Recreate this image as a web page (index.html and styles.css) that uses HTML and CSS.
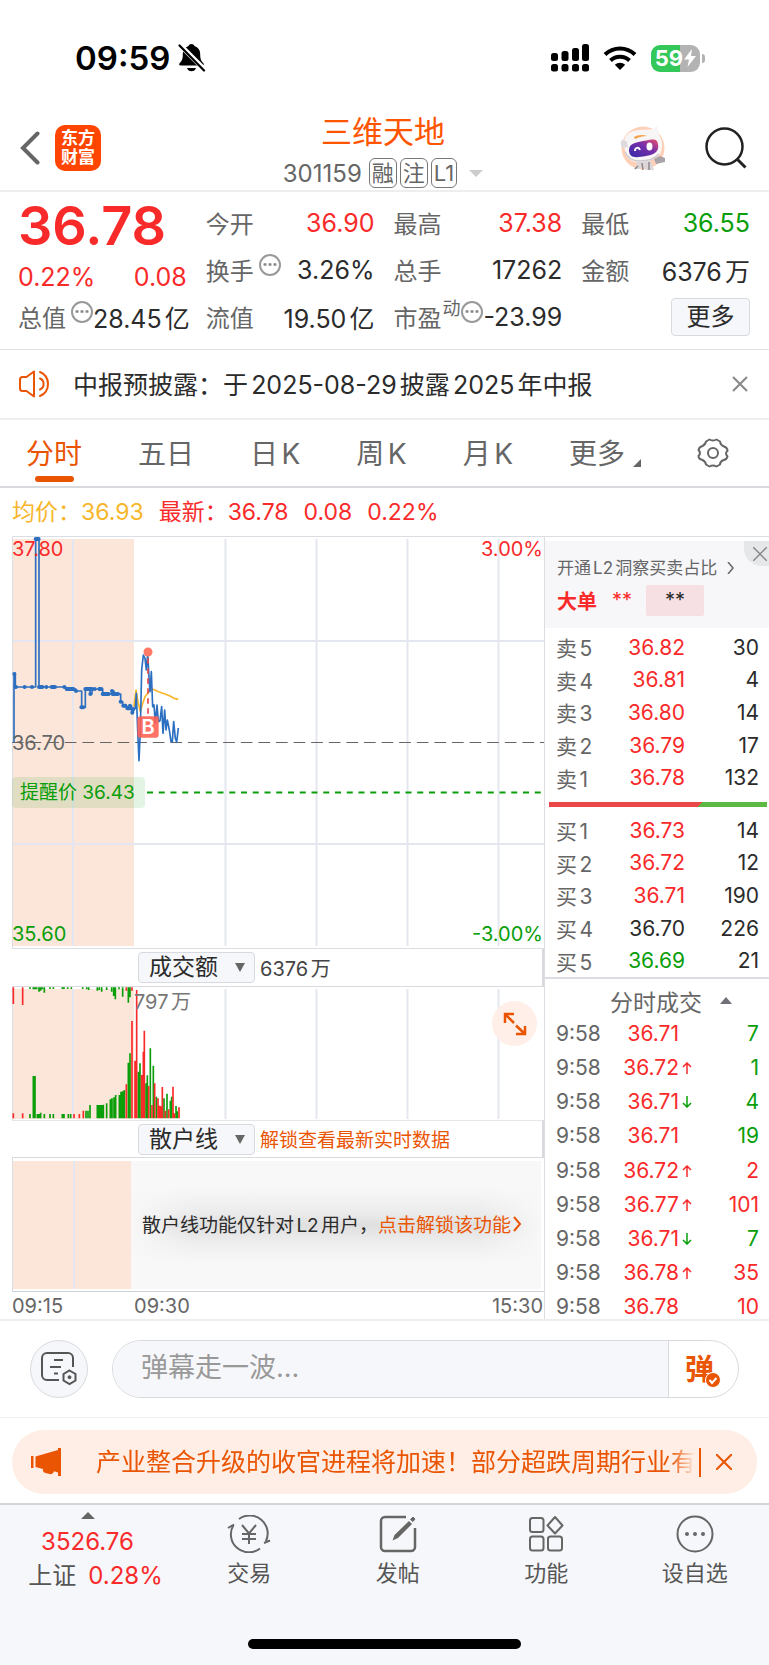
FILE: index.html
```html
<!DOCTYPE html>
<html lang="zh-CN">
<head>
<meta charset="utf-8">
<meta name="viewport" content="width=device-width, initial-scale=1">
<title>三维天地 301159</title>
<link rel="stylesheet" href="styles.css">
</head>
<body>
<div class="app">
  <div class="status">
    <div class="status-left">
      <span class="clock">09:59</span>
      <svg class="bell" viewBox="0 0 28 30" width="28" height="30"><path d="M13.500 1c-1.500 0-2.600.8-3 2.100C6.200 4.600 4.800 8 4.800 11.500c0 5-1.300 6.700-3.200 8.700-.9 1-.4 2.300 1 2.300h21.800c1.400 0 1.900-1.300 1-2.300-1.900-2-3.200-3.700-3.200-8.700 0-3.500-1.400-6.900-5.700-8.400-.4-1.300-1.500-2.100-3-2.100z"/><path d="M9 25h9c-.6 2-2.300 3.300-4.500 3.300S9.600 27 9 25z"/><path d="M0 0l27 27" stroke="#fff" stroke-width="5"/><path d="M1.500 2.500l24.500 25" stroke="#000" stroke-width="2.200" stroke-linecap="round"/></svg>
    </div>
    <div class="status-right">
      <svg viewBox="0 0 38 28" width="38" height="28"><rect x="0" y="9" width="7" height="8" rx="2.500"/><rect x="10.500" y="7" width="7" height="10" rx="2.500"/><rect x="21" y="4" width="7" height="13" rx="2.500"/><rect x="31" y="0" width="7" height="17" rx="2.500"/><rect x="0" y="20" width="7" height="7.500" rx="2.500"/><rect x="10.500" y="20" width="7" height="7.500" rx="2.500"/><rect x="21" y="20" width="7" height="7.500" rx="2.500"/><rect x="31" y="20" width="7" height="7.500" rx="2.500"/></svg>
      <svg viewBox="0 0 34 26" width="34" height="26" fill="none" stroke="#000" stroke-width="4"><path d="M2 9.500a21.500 21.500 0 0 1 30 0"/><path d="M7.500 15.500a13.800 13.800 0 0 1 19 0"/><path d="M11.800 19.800a7.600 7.600 0 0 1 10.400 0L17 25z" fill="#000" stroke="none"/></svg>
      <span class="battery"><span class="battery-num">59</span><svg viewBox="0 0 12 18" width="12" height="18"><path d="M8 0L0 10.500h5L3.500 18 12 7H7z" fill="#fff"/></svg></span>
    </div>
  </div>

  <header class="header">
    <div class="head-left">
      <button class="plain" aria-label="返回"><svg viewBox="0 0 20 34" width="20" height="34" fill="none" stroke="#666" stroke-width="4" stroke-linecap="round"><path d="M17.500 2.500L3 17l14.500 14.500"/></svg></button>
      <span class="logo"><span>东方</span><span>财富</span></span>
    </div>
    <div class="head-mid">
      <h1>三维天地</h1>
      <div class="code"><span class="num">301159</span><span class="tags"><span class="tag">融</span><span class="tag">注</span><span class="tag">L1</span></span><i class="caret-down"></i></div>
    </div>
    <div class="head-right">
      <svg viewBox="0 0 46 46" width="46" height="46">
        <defs><linearGradient id="visor" x1="0" y1="1" x2="1" y2="0"><stop offset="0" stop-color="#3328a8"/><stop offset=".6" stop-color="#7a2fa8"/><stop offset="1" stop-color="#f0506a"/></linearGradient></defs>
        <circle cx="23" cy="23" r="21.500" fill="#ffd0b8"/>
        <path d="M16 36l1 4-3 4h6l3-3 3 4h8l-3-9z" fill="#dcd8da"/><path d="M22 38l1 7M29 37v8M18 41l-3 3" stroke="#8d868a" stroke-width="1.500"/>
        <path d="M34 34l6-3 5 2v4l-9 2z" fill="#a9a4a9"/>
        <path d="M4 19C3 10 11 5 20 5c8-1 13 1 17-4l2 9c4 6 4 13 1 19-5 6-14 8-22 8C9 37 6 31 5 26z" fill="#f7f5f6"/>
        <path d="M5 27c3 7 8 9 14 9 8 0 16-2 20-7" fill="none" stroke="#cfcacd" stroke-width="1.500"/>
        <path d="M1 16c2-2 5-1 6 1l1 5-5 1c-2-2-3-4-2-7z" fill="#dedadd"/>
        <path d="M14 12c3-2 9-3 13-1-4 0-8 1-12 3z" fill="#f5a04a"/>
        <path d="M9 26c0-7 4-8 14-10s14-3 15 3-1 10-12 12S10 33 9 26z" fill="url(#visor)"/>
        <path d="M15 26c0-4 4-4 5-1" fill="none" stroke="#fff" stroke-width="2"/><ellipse cx="29.500" cy="21.500" rx="3" ry="4" fill="#fff"/>
      </svg>
      <button class="plain" aria-label="搜索"><svg viewBox="0 0 42 42" width="42" height="42" fill="none" stroke="#222" stroke-width="2.500"><circle cx="19.500" cy="19.500" r="18"/><path d="M32 32l8.500 8.500" stroke-width="3"/></svg></button>
    </div>
  </header>

  <section class="quote">
    <div class="price-box">
      <strong class="price">36.78</strong>
      <div class="change"><span>0.22%</span><span>0.08</span></div>
    </div>
    <div class="cell c2"><span class="lab">今开</span><span class="up">36.90</span></div>
    <div class="cell c3"><span class="lab">最高</span><span class="up">37.38</span></div>
    <div class="cell c4"><span class="lab">最低</span><span class="down">36.55</span></div>
    <div class="cell c2"><span class="lab">换手<i class="info g"></i></span><span>3.26%</span></div>
    <div class="cell c3"><span class="lab">总手</span><span>17262</span></div>
    <div class="cell c4"><span class="lab">金额</span><span>6376万</span></div>
    <div class="cell c1"><span class="lab">总值<i class="info g"></i></span><span>28.45亿</span></div>
    <div class="cell c2"><span class="lab">流值</span><span>19.50亿</span></div>
    <div class="cell c3"><span class="lab">市盈<sup>动</sup><i class="info"></i></span><span>-23.99</span></div>
    <div class="cell c4 end"><button class="more">更多</button></div>
  </section>

  <section class="notice">
    <svg viewBox="0 0 34 28" width="34" height="28" fill="none" stroke="#ea5504" stroke-width="2" stroke-linejoin="round" stroke-linecap="round"><path d="M15 1.500L7.500 7H3.500C2 7 1 8 1 9.500v9C1 20 2 21 3.500 21h4l7.500 5.500z"/><path d="M21 8.500a6 6 0 0 1 0 11M21 2a13 13 0 0 1 0 24"/></svg>
    <p>中报预披露：于2025-08-29披露2025年中报</p>
    <button class="plain" aria-label="关闭"><svg viewBox="0 0 16 16" width="16" height="16" stroke="#888" stroke-width="2"><path d="M1 1l14 14M15 1L1 15"/></svg></button>
  </section>

  <nav class="tabs">
    <button class="tab on">分时</button>
    <button class="tab">五日</button>
    <button class="tab">日K</button>
    <button class="tab">周K</button>
    <button class="tab">月K</button>
    <button class="tab tab-more">更多<svg viewBox="0 0 8 8" width="8" height="8"><path d="M8 0v8H0z" fill="#666"/></svg></button>
    <button class="tab tab-set" aria-label="设置"><svg viewBox="0 0 32 32" width="32" height="32" fill="none" stroke="#666" stroke-width="2"><path d="M12.500 2.500Q16 4.500 19.500 2.500L23 4.500Q23.500 8.500 27 9.500Q30.500 10.500 30.500 14Q27.500 16 30.500 19.500Q29.500 23 26.500 23Q23 24.500 23 27.500L19.500 29.500Q16 27.500 12.500 29.500L9 27.500Q8.500 24.500 5.500 23Q1.500 22 1.500 19Q4.500 16 1.500 13Q2 10 5.500 9Q8.500 7.500 9 4.500Z" stroke-linejoin="round"/><circle cx="16" cy="16" r="5"/></svg></button>
  </nav>

  <div class="legend"><span class="avg">均价：<span>36.93</span></span><span>最新：<span>36.78</span></span><span>0.08</span><span>0.22%</span></div>

  <main class="board">
    <div class="charts">
      <div class="plot">
        <svg viewBox="0 0 532 413">
          <rect x="0" y="3" width="122" height="407" fill="#fce6da"/>
          <path d="M61 3v407M213.500 3v407M304.500 3v407M395.500 3v407M486.500 3v407M0 105h532M0 308h532" stroke="#e4e7ef" stroke-width="2" fill="none"/>
          <path d="M.5 413V.5H532M0 412.500H532" stroke="#dcdde2" fill="none"/>
          <path d="M0 206.500H532" stroke="#666" stroke-width="1" stroke-dasharray="11.700 5.900" fill="none"/>
          <path d="M135 256.500H529" stroke="#0a9e0a" stroke-width="2" stroke-dasharray="6 5.750" fill="none"/>
          <g transform="translate(-12,-6) scale(.33333)" fill="none" stroke-linejoin="round">
            <path stroke="#f8b62b" stroke-width="5" d="M402 530L408 480L414 515L421 545L428 520L435 500L443 490L448 482L460 478L475 485L495 492L510 498L522 505L535 508"/>
            <path stroke="#2c6fc0" stroke-width="5" d="M42 637V430H46V471H107V27H117V471H197V477H228V483H245V532H256V477H270V492H276V477H308V492H336V483H342V492H362V515H368V527H380V535H388V528H395V548H400V535H406L409 490L413 600L417 692L421 600L425 420L430 375L435 385L439 420L443 370L448 460L450 485L454 425L458 530L462 525L466 580L471 525L475 575L480 572L485 530L489 610L494 540L498 600L502 570L508 600L513 635L517 635L521 575L526 625L530 637L535 594"/>
            <path stroke="#2c6fc0" stroke-width="12" stroke-linecap="round" d="M43 432h0M46 471h2M74 471h0M96 471h0M107 27h9M117 471h10M139 471h0M155 471h10M193 471h0M200 477h20M228 483h0M244 532h5M256 477h20M271 492h0M284 477h0M298 477h6M308 492h18M336 483h0M338 492h16M362 515h0M370 527h6M382 535h8M390 527h0M397 548h0M400 538h0"/>
            <path stroke="#e5484d" stroke-width="5" stroke-dasharray="16 14" d="M444 385V556"/>
            <circle cx="444" cy="366" r="13.500" fill="#ff7a66"/>
            <rect x="412" y="559" width="64" height="64" rx="9" fill="#ff5f50" fill-opacity=".88"/>
            <text class="mark" x="444" y="613" text-anchor="middle">B</text>
          </g>
        </svg>
        <span class="axis tl up">37.80</span><span class="axis tr up">3.00%</span>
        <span class="axis ml">36.70</span>
        <span class="axis bl down">35.60</span><span class="axis br down">-3.00%</span>
        <span class="alert">提醒价 36.43</span>
      </div>
      <div class="bar-row">
        <span class="pick"><select aria-label="副图一"><option>成交额</option></select></span><span>6376万</span>
      </div>
      <div class="plot">
        <svg viewBox="0 0 532 133">
          <rect x="0" y="2" width="122" height="130" fill="#fce6da"/>
          <path d="M61 2v130M213.500 2v130M304.500 2v130M395.500 2v130M486.500 2v130" stroke="#e4e7ef" stroke-width="2" fill="none"/>
          <path d="M.5 0V133" stroke="#dcdde2"/>
          <g transform="translate(-12,-47) scale(.33333)" fill="none" stroke-width="5">
            <path stroke="#0a9e0a" d="M90 535V522M100 535V408M105 535V408M112 535V522M117 535V522M122 535V518M133 535V522M150 535V522M160 535V522M187 535V522M192 535V522M205 535V522M212 535V522M258 535V512M264 535V512M270 535V495M292 535V495M297 535V495M302 535V495M307 535V495M310 535V494M320 535V490M331 535V478M336 535V475M342 535V472M347 535V465M358 535V465M363 535V455M368 535V454M373 535V450M385 535V368M390 535V340M415 535V395M420 535V370M438 535V430M442 535V406M451 535V325M460 535V377M469 535V470M492 535V475M501 535V461M511 535V482M515 535V470M528 535V498M532 535V514"/>
            <path stroke="#0a9e0a" d="M90 142V147M100 142V148M105 142V148M110 142V148M117 142V155M122 142V152M127 142V148M133 142V158M150 142V147M160 142V147M187 142V147M192 142V147M203 142V147M214 142V147M248 142V147M260 142V148M266 142V150M292 142V152M298 142V150M305 142V155M320 142V150M335 142V155M341 142V168M346 142V178M357 142V148M368 142V170M385 142V188M390 142V172"/>
            <path stroke="#f92a2a" d="M40 535V520M68 535V520M222 535V522M238 535V522M250 535V512M379 535V433M396 535V243M405 535V362M410 535V150M425 535V405M430 535V335M433 535V272M446 535V438M456 535V495M464 535V430M474 535V475M479 535V497M484 535V499M487 535V441M496 535V512M506 535V508M519 535V440M523 535V520M537 535V502M40 142V192M68 142V195M379 142V152M396 142V152"/>
          </g>
        </svg>
        <span class="axis vol">797万</span>
        <button class="expand" aria-label="全屏"><svg viewBox="0 0 24 24" width="24" height="24" fill="none" stroke="#ea5504" stroke-width="2.500"><path d="M2 11V2h9M2 2l9 9M22 14v8h-9M22 22l-9-8.500"/></svg></button>
      </div>
      <div class="bar-row line">
        <span class="pick"><select aria-label="副图二"><option>散户线</option></select></span><a href="#" class="link">解锁查看最新实时数据</a>
      </div>
      <div class="locked">
        <div class="pre"></div>
        <p class="lock-msg">散户线功能仅针对L2用户，<a href="#" class="link">点击解锁该功能<svg viewBox="0 0 9 16" width="9" height="16" fill="none" stroke="#ea5504" stroke-width="2"><path d="M1 1l6 7-6 7"/></svg></a></p>
      </div>
      <div class="times"><span>09:15</span><span class="t2">09:30</span><span class="t3">15:30</span></div>
    </div>

    <aside class="side">
      <div class="l2">
        <a href="#" class="l2-link">开通L2洞察买卖占比<svg viewBox="0 0 8 12" width="8" height="12" fill="none" stroke="#666" stroke-width="1.500"><path d="M1 0l5 6-5 6"/></svg></a>
        <div class="l2-row"><b>大单</b><span class="stars up">**</span><span class="stars box">**</span></div>
        <button class="l2-close" aria-label="关闭"><svg viewBox="0 0 14 14" width="14" height="14" stroke="#888" stroke-width="1.500"><path d="M0 0l14 14M14 0L0 14"/></svg></button>
      </div>
      <table class="book"><tbody>
        <tr><th>卖5</th><td class="up">36.82</td><td>30</td></tr>
        <tr><th>卖4</th><td class="up">36.81</td><td>4</td></tr>
        <tr><th>卖3</th><td class="up">36.80</td><td>14</td></tr>
        <tr><th>卖2</th><td class="up">36.79</td><td>17</td></tr>
        <tr><th>卖1</th><td class="up">36.78</td><td>132</td></tr>
      </tbody></table>
      <div class="ratio"></div>
      <table class="book"><tbody>
        <tr><th>买1</th><td class="up">36.73</td><td>14</td></tr>
        <tr><th>买2</th><td class="up">36.72</td><td>12</td></tr>
        <tr><th>买3</th><td class="up">36.71</td><td>190</td></tr>
        <tr><th>买4</th><td>36.70</td><td>226</td></tr>
        <tr><th>买5</th><td class="down">36.69</td><td>21</td></tr>
      </tbody></table>
      <button class="deals-head">分时成交<svg viewBox="0 0 12 7" width="12" height="7"><path d="M6 0l6 7H0z" fill="#707078"/></svg></button>
      <table class="deals"><tbody>
        <tr><th>9:58</th><td class="up">36.71</td><td></td><td class="down">7</td></tr>
        <tr><th>9:58</th><td class="up">36.72</td><td class="ar up"><svg viewBox="0 0 10 12" width="10" height="12"><path d="M5 12V1M1 5l4-4 4 4"/></svg></td><td class="down">1</td></tr>
        <tr><th>9:58</th><td class="up">36.71</td><td class="ar down"><svg viewBox="0 0 10 12" width="10" height="12"><path d="M5 0v11M1 7l4 4 4-4"/></svg></td><td class="down">4</td></tr>
        <tr><th>9:58</th><td class="up">36.71</td><td></td><td class="down">19</td></tr>
        <tr><th>9:58</th><td class="up">36.72</td><td class="ar up"><svg viewBox="0 0 10 12" width="10" height="12"><path d="M5 12V1M1 5l4-4 4 4"/></svg></td><td class="up">2</td></tr>
        <tr><th>9:58</th><td class="up">36.77</td><td class="ar up"><svg viewBox="0 0 10 12" width="10" height="12"><path d="M5 12V1M1 5l4-4 4 4"/></svg></td><td class="up">101</td></tr>
        <tr><th>9:58</th><td class="up">36.71</td><td class="ar down"><svg viewBox="0 0 10 12" width="10" height="12"><path d="M5 0v11M1 7l4 4 4-4"/></svg></td><td class="down">7</td></tr>
        <tr><th>9:58</th><td class="up">36.78</td><td class="ar up"><svg viewBox="0 0 10 12" width="10" height="12"><path d="M5 12V1M1 5l4-4 4 4"/></svg></td><td class="up">35</td></tr>
        <tr><th>9:58</th><td class="up">36.78</td><td></td><td class="up">10</td></tr>
      </tbody></table>
    </aside>
  </main>

  <form class="chat">
    <button type="button" class="round" aria-label="弹幕设置"><svg viewBox="0 0 36 34" width="36" height="34" fill="none" stroke="#555" stroke-width="2"><path d="M18 28H6a5 5 0 0 1-5-5V6a5 5 0 0 1 5-5h21a5 5 0 0 1 5 5v9"/><path d="M13 8h9M9 15h11M13 21.500h4"/><path d="M28.500 18.500l6 3.500v6.500l-6 3.500-6-3.500V22z" fill="#f6f7fa"/><circle cx="28.500" cy="25.200" r="1.500" fill="#555" stroke-width="1"/></svg></button>
    <div class="field">
      <input type="text" placeholder="弹幕走一波..." aria-label="弹幕">
      <button type="button" class="send">弹<svg viewBox="0 0 16 16" width="16" height="16"><circle cx="8" cy="8" r="7.500" fill="#ea5504" stroke="#fff"/><path d="M4.500 8l2.500 3 4.500-5" stroke="#fff" stroke-width="2" fill="none"/></svg></button>
    </div>
  </form>

  <section class="banner">
    <svg viewBox="0 0 30 28" width="30" height="28" fill="#ea5504"><path d="M0 8h2.500v12H0zM4.500 8.500L27 2V0h3v28h-3v-3.500l-4-1.200c-.5 2.200-2.500 3.200-4.500 2.700l-4-1c-2-.5-3-2-2.500-4L4.500 19z"/></svg>
    <div class="ticker"><p>产业整合升级的收官进程将加速！部分超跌周期行业有</p></div>
    <button class="plain" aria-label="关闭"><svg viewBox="0 0 16 16" width="16" height="16" stroke="#ea5504" stroke-width="2"><path d="M0 0l16 16M16 0L0 16"/></svg></button>
  </section>

  <nav class="dock">
    <a href="#" class="index"><i class="caret-up"></i><span class="up">3526.76</span><span class="idx-row">上证 <span class="up">0.28%</span></span></a>
    <a href="#" class="item"><svg viewBox="0 0 44 38" width="44" height="38" fill="none" stroke="#666" stroke-width="2"><path d="M12 4A18 18 0 0 1 38.800 26.500M37 28l6-2.500"/><path d="M33 33.500A18 18 0 0 1 6.500 10M1 13l6-3.500"/><path d="M15 10l7 8.500 7-8.500M22 18.500V29M15 19h14M15 24h14"/></svg><span>交易</span></a>
    <a href="#" class="item"><svg viewBox="0 0 38 38" width="38" height="38" fill="none" stroke="#666" stroke-width="2.500"><path d="M27 2H6a4 4 0 0 0-4 4v26a4 4 0 0 0 4 4h26a4 4 0 0 0 4-4V13"/><path d="M13.500 25.500l2-5.500L30 6l3 3-14 14z" fill="#666" stroke="none"/><path d="M31.500 4.500l2.500-2.500 2 2-2 2.500z" fill="#666" stroke="#666" stroke-width="1"/></svg><span>发帖</span></a>
    <a href="#" class="item"><svg viewBox="0 0 36 38" width="36" height="38" fill="none" stroke="#666" stroke-width="2" stroke-linejoin="round"><rect x="2" y="3" width="13.500" height="14" rx="2.500"/><rect x="2" y="21.500" width="13.500" height="14" rx="2.500"/><rect x="20" y="21.500" width="14" height="14" rx="2.500"/><path d="M27 2l7.500 8.500L27 18.500 19.500 10.500z"/></svg><span>功能</span></a>
    <a href="#" class="item"><svg viewBox="0 0 38 38" width="38" height="38" fill="none" stroke="#666" stroke-width="2"><circle cx="19" cy="19" r="17.500"/><path d="M11 19h0M19 19h0M27 19h0" stroke-width="4" stroke-linecap="round"/></svg><span>设自选</span></a>
    <div class="home"></div>
  </nav>
</div>
</body>
</html>
```
FILE: styles.css
```css
* { box-sizing: border-box; }
body {
  margin: 0;
  background: #fff;
  color: #2b2b2b;
  font-family: Inter, "Noto Sans CJK SC", sans-serif;
  text-autospace: normal;
}
h1, p { margin: 0; font-weight: 400; }
i { font-style: normal; }
svg { display: block; flex: none; }
button { font: inherit; color: inherit; border: 0; background: none; padding: 0; cursor: pointer; }
a { color: inherit; text-decoration: none; }
table { border-spacing: 0; }
th, td { padding: 0; font-weight: 400; }
.up { color: #f92a2a; }
.down { color: #0a9e0a; }
.link { color: #ea5504; }
.app { display: flex; flex-direction: column; min-height: 100vh; }

/* status bar */
.status { display: flex; justify-content: space-between; padding: 38px 64px 22px 75px; height: 100px; color: #000; }
.status-left, .status-right { display: flex; align-items: center; }
.status-left { gap: 8px; }
.clock { font-size: 33px; font-weight: 600; line-height: 40px; }
.status-right { gap: 14px; }
.battery {
  position: relative; display: flex; align-items: center; justify-content: center; gap: 1px;
  width: 49px; height: 27px; margin-right: 5px; border-radius: 9px; color: #fff;
  background: linear-gradient(90deg, #34c759 59%, #b3b3b3 59%);
}
.battery::after { content: ""; position: absolute; left: 51px; top: 9px; width: 3px; height: 9px; border-radius: 0 3px 3px 0; background: #b3b3b3; }
.battery-num { font-size: 22px; font-weight: 700; line-height: 27px; }

/* title bar */
.header { display: grid; grid-template-columns: 1fr auto 1fr; height: 92px; border-bottom: 2px solid #eee; }
.head-left, .head-right { display: flex; align-items: center; padding: 5px 20px 0; }
.head-left { gap: 15px; }
.head-right { justify-content: flex-end; gap: 39px; padding-right: 22px; }
.logo {
  display: flex; flex-direction: column; align-items: center; justify-content: center;
  width: 46px; height: 46px; border-radius: 10px; background: #ff4500;
  color: #fff; font-size: 17px; font-weight: 700; line-height: 19px;
}
.head-mid { display: flex; flex-direction: column; align-items: center; gap: 6px; padding: 12px 3px 0 0; }
.head-mid h1 { font-size: 31px; line-height: 40px; color: #ff5500; }
.code { display: flex; align-items: center; height: 30px; color: #666; font-size: 24px; }
.tags { display: flex; gap: 3px; margin: 0 12px 0 7px; }
.tag { height: 30px; padding: 0 2px; border: 1px solid #777; border-radius: 6px; font-size: 22px; line-height: 28px; }
.caret-down { border: 7px solid transparent; border-top-color: #ccc; border-bottom: 0; }

/* quote */
.quote {
  display: grid; grid-template-columns: repeat(4, minmax(0, 1fr)); grid-auto-rows: 47px; column-gap: 19px;
  padding: 7px 19px 9px 18px; border-bottom: 1px solid #e2e2e2; font-size: 25px;
}
.price-box { grid-row: span 2; display: flex; flex-direction: column; justify-content: space-between; color: #f92a2a; }
.price { font-size: 54px; font-weight: 600; line-height: 54px; }
.change { display: flex; justify-content: space-between; line-height: 32px; }
.cell { display: flex; align-items: center; justify-content: space-between; white-space: nowrap; }
.end { justify-content: flex-end; }
.lab { display: flex; align-items: center; color: #666; font-size: 24px; }
.lab sup { align-self: flex-start; margin-left: 1px; font-size: 18px; line-height: 20px; }
.info { width: 22px; height: 22px; margin-bottom: 10px; border: 2px solid #999; border-radius: 50%; background: radial-gradient(circle, #888 1px, transparent 2px) center / 5px 5px repeat-x; background-clip: content-box; padding: 0 2px; }
.info.g { margin-left: 5px; }
.more { width: 79px; height: 38px; border: 1px solid #d8dae0; border-radius: 4px; background: #f6f7fa; font-size: 24px; line-height: 34px; }

/* notice */
.notice { display: flex; align-items: center; height: 70px; padding: 0 21px 0 19px; border-bottom: 2px solid #eee; font-size: 25px; }
.notice p { flex: 1; margin-left: 20px; padding-bottom: 3px; white-space: nowrap; }

/* period tabs */
.tabs { display: flex; justify-content: space-between; height: 68px; padding: 0 40px 0 26px; border-bottom: 2px solid #d9dade; color: #666; font-size: 28px; }
.tab { position: relative; padding-bottom: 3px; }
.tab-set { padding-bottom: 0; }
.on { color: #ea5504; }
.on::after { content: ""; position: absolute; left: 9px; right: 8px; bottom: 4px; height: 6px; border-radius: 3px; background: #ea5504; }
.tab-more { display: flex; align-items: center; gap: 8px; }
.tab-more svg { margin-top: 22px; }

.legend { display: flex; gap: 15px; padding: 0 12px; color: #f92a2a; font-size: 23px; line-height: 48px; }
.avg { color: #f8b62b; }

/* board */
.board { display: grid; grid-template-columns: minmax(0, 1fr) 225px; border-bottom: 2px solid #eee; }
.charts { display: flex; flex-direction: column; margin-left: 12px; }
.plot { position: relative; }
.plot > svg { width: 100%; height: auto; }
.mark { fill: #fff; font-size: 60px; font-weight: 600; }
.axis { position: absolute; font-size: 20px; line-height: 24px; }
.tl { left: 0; top: 1px; }
.tr { right: 1px; top: 1px; }
.ml { left: 0; top: 50%; transform: translateY(-50%); color: #666; }
.bl { left: 0; bottom: 3px; }
.br { right: 1px; bottom: 3px; }
.alert { position: absolute; left: 0; top: 241px; padding: 0 10px 0 8px; border-radius: 4px; background: rgba(10, 158, 10, .11); color: #0a9e0a; font-size: 19px; line-height: 31px; }
.bar-row { display: flex; align-items: center; gap: 5px; height: 38px; padding-left: 126px; border-bottom: 1px solid #d9dade; border-right: 2px solid #d9dade; color: #444; font-size: 20px; }
.line { border-top: 1px solid #e4e6ea; }
.bar-row .link { padding-bottom: 2px; font-size: 19px; }
.pick { position: relative; }
.pick::after { content: ""; position: absolute; right: 10px; top: 11px; border: 5px solid transparent; border-top: 9px solid #666; border-bottom: 0; }
.pick select { display: block; width: 117px; height: 31px; padding: 0 10px; appearance: none; border: 1px solid #d8dae0; border-radius: 4px; background: #f6f7fa; color: #2b2b2b; font: inherit; font-size: 23px; line-height: 29px; }
.vol { left: 122px; top: 3px; color: #777; }
.expand { position: absolute; right: 7px; top: 14px; display: grid; place-items: center; width: 45px; height: 45px; border-radius: 50%; background: #ffefe8; }
.locked { display: flex; height: 134px; padding: 3px 3px 2px 0; border-left: 1px solid #dcdde2; border-bottom: 1px solid #cfd2d8; }
.pre { width: 118px; background: linear-gradient(90deg, transparent 60px, #e4e7ef 60px, #e4e7ef 62px, transparent 62px) #fce6da; }
.lock-msg {
  flex: 1; display: flex; align-items: center; padding: 0 0 3px 11px; font-size: 19px; white-space: nowrap;
  background: linear-gradient(90deg, #f8f8f8, transparent 15%, transparent 85%, #f8f8f8), linear-gradient(#f8f8f8 20%, #ececec 40%, #dfdfdf 50%, #ececec 62%, #f8f8f8 80%);
}
.lock-msg .link { display: flex; align-items: center; gap: 2px; }
.times { display: flex; padding-top: 2px; color: #666; font-size: 20px; line-height: 25px; }
.t2 { margin-left: 71px; }
.t3 { margin-left: auto; margin-right: 1px; }

/* side */
.side { display: flex; flex-direction: column; border-left: 1px solid #dcdde2; border-top: 1px solid #dcdde2; font-size: 21px; }
.l2 { position: relative; height: 87px; margin-top: 4px; padding: 14px 12px 0; background: #f7f7fa; }
.l2-link { display: flex; align-items: center; gap: 10px; color: #666; font-size: 17px; line-height: 26px; white-space: nowrap; }
.l2-row { display: flex; align-items: center; height: 31px; margin-top: 4px; color: #f92a2a; font-size: 20px; }
.stars { margin-left: 15px; line-height: 31px; }
.box { width: 58px; margin-left: 14px; border-radius: 2px; background: #f6e0e3; color: #2b2b2b; text-align: center; }
.l2-close { position: absolute; right: 0; top: 0; display: grid; place-items: center; width: 25px; height: 25px; padding-left: 6px; border-bottom-left-radius: 18px; background: #e6e7e9; }
.book { display: block; padding: 3px 10px 0 11px; }
.book tbody { display: grid; grid-auto-rows: 1fr; height: 163px; }
.book tr { display: grid; grid-template-columns: 54px 75px 1fr; align-items: center; text-align: right; }
.side th { color: #666; text-align: left; }
.ratio { height: 5px; margin: 8px 2px 4px 4px; background: linear-gradient(135deg, #ea4848 69%, #5cb944 69%); }
.deals-head { display: flex; align-items: center; justify-content: center; gap: 18px; height: 45px; padding-left: 28px; border-top: 2px solid #dcdde2; color: #666; font-size: 23px; }
.deals { display: flex; flex: 1; padding: 0 10px 0 11px; }
.deals tbody { flex: 1; display: flex; flex-direction: column; justify-content: space-between; }
.deals tr { display: grid; grid-template-columns: 50px 73px 15px 1fr; align-items: center; height: 24px; line-height: 24px; text-align: right; }
.ar svg { margin-left: 3px; fill: none; stroke: currentColor; stroke-width: 1.500; }

/* chat */
.chat { display: flex; align-items: center; gap: 24px; height: 97px; padding: 0 30px 0 30px; border-bottom: 1px solid #eee; }
.round { display: grid; place-items: center; width: 58px; height: 58px; border: 1px solid #d9dade; border-radius: 50%; background: #f6f7fa; }
.field { flex: 1; display: flex; height: 58px; border: 1px solid #d9dade; border-radius: 29px; overflow: hidden; }
.field input { flex: 1; min-width: 0; padding: 0 0 4px 28px; border: 0; border-right: 1px solid #d9dade; background: #f6f7fa; font: inherit; font-size: 27px; text-autospace: no-autospace; }
.field input::placeholder { color: #999; opacity: 1; }
.send { position: relative; width: 69px; padding: 0 8px 5px 0; color: #ea5504; font-size: 29px; font-weight: 700; }
.send svg { position: absolute; left: 36px; top: 31px; }

/* banner */
.banner { display: flex; align-items: center; height: 64px; margin: 12px 12px 9px; padding: 0 25px 0 19px; border-radius: 32px; background: #feeee5; color: #ea5504; font-size: 25px; }
.ticker { flex: 1; min-width: 0; margin: 0 15px 0 35px; padding-right: 4px; border-right: 2px solid #ea5504; line-height: 29px; }
.ticker p { overflow: hidden; white-space: nowrap; -webkit-mask-image: linear-gradient(90deg, #000 calc(100% - 24px), transparent); mask-image: linear-gradient(90deg, #000 calc(100% - 24px), transparent); }

/* dock */
.dock { flex: 1; display: grid; grid-template-columns: 175px repeat(4, 1fr); grid-template-rows: 1fr auto; border-top: 2px solid #d3d4d8; background: #f6f7fa; color: #555; }
.index { display: flex; flex-direction: column; align-items: center; padding-top: 7px; font-size: 24px; }
.index > .up { margin-top: 6px; line-height: 34px; }
.caret-up { border: 7px solid transparent; border-bottom-color: #666; border-top: 0; }
.idx-row { display: flex; gap: 12px; padding-left: 16px; line-height: 34px; }
.item { display: flex; flex-direction: column; align-items: center; gap: 5px; padding-top: 10px; font-size: 22px; line-height: 30px; }
.home { grid-column: 1 / -1; justify-self: center; width: 273px; height: 10px; margin-bottom: 16px; border-radius: 5px; background: #000; }
```
